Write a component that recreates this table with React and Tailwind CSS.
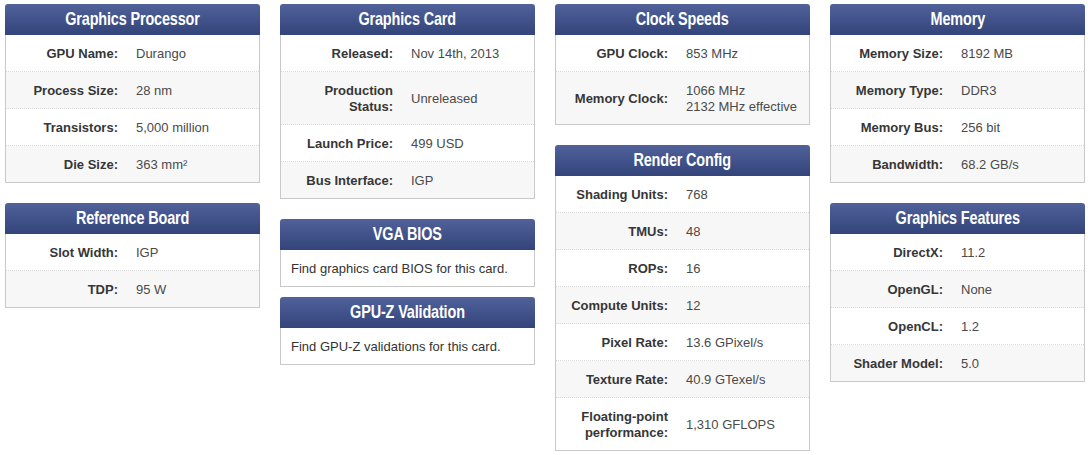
const col1 = [
  {
    title: 'Graphics Processor',
    rows: [
      ['GPU Name:', 'Durango'],
      ['Process Size:', '28 nm'],
      ['Transistors:', '5,000 million'],
      ['Die Size:', <>363 mm²</>],
    ],
  },
  {
    title: 'Reference Board',
    rows: [
      ['Slot Width:', 'IGP'],
      ['TDP:', '95 W'],
    ],
  },
];

const col2 = [
  {
    title: 'Graphics Card',
    rows: [
      ['Released:', 'Nov 14th, 2013'],
      [<>Production<br />Status:</>, 'Unreleased'],
      ['Launch Price:', '499 USD'],
      ['Bus Interface:', 'IGP'],
    ],
  },
  { title: 'VGA BIOS', text: 'Find graphics card BIOS for this card.', small: true },
  { title: 'GPU-Z Validation', text: 'Find GPU-Z validations for this card.' },
];

const col3 = [
  {
    title: 'Clock Speeds',
    rows: [
      ['GPU Clock:', '853 MHz'],
      ['Memory Clock:', <>1066 MHz<br />2132 MHz effective</>],
    ],
  },
  {
    title: 'Render Config',
    rows: [
      ['Shading Units:', '768'],
      ['TMUs:', '48'],
      ['ROPs:', '16'],
      ['Compute Units:', '12'],
      ['Pixel Rate:', '13.6 GPixel/s'],
      ['Texture Rate:', '40.9 GTexel/s'],
      [<>Floating-point<br />performance:</>, '1,310 GFLOPS'],
    ],
  },
];

const col4 = [
  {
    title: 'Memory',
    rows: [
      ['Memory Size:', '8192 MB'],
      ['Memory Type:', 'DDR3'],
      ['Memory Bus:', '256 bit'],
      ['Bandwidth:', '68.2 GB/s'],
    ],
  },
  {
    title: 'Graphics Features',
    rows: [
      ['DirectX:', '11.2'],
      ['OpenGL:', 'None'],
      ['OpenCL:', '1.2'],
      ['Shader Model:', '5.0'],
    ],
  },
];

function Card({ card }) {
  return (
    <section className={card.small ? 'mb-[10px]' : 'mb-[20px]'}>
      {/* condensed title font isn't installed, so squeeze a bold sans */}
      <h2 className="h-[31px] overflow-hidden whitespace-nowrap rounded-t-[3px] bg-gradient-to-b from-[#51629b] to-[#33447b] text-center text-[19px] font-bold leading-[30px] tracking-[-0.2px] text-white">
        <span className="inline-block scale-x-[0.76]">{card.title}</span>
      </h2>
      <div className="border border-t-0 border-[#c9c9c9]">
        {card.rows &&
          card.rows.map(([label, value], i) => (
            <div
              key={i}
              className={`flex items-center border-[#d8d8d8] ${i % 2 ? 'bg-[#f7f7f7]' : 'bg-white'} ${i < card.rows.length - 1 ? 'border-b border-dotted' : ''}`}
            >
              <div className="w-[120px] shrink-0 pb-[9px] pt-[11px] pr-[8px] text-right font-bold text-[#363636]">
                {label}
              </div>
              <div className="flex-1 pb-[9px] pt-[11px] pl-[10px] text-[#4a4a4a]">{value}</div>
            </div>
          ))}
        {card.text && <p className="px-[10px] pb-[9px] pt-[11px] text-[#333]">{card.text}</p>}
      </div>
    </section>
  );
}

export default function App() {
  const cols = [col1, col2, col3, col4];
  return (
    <div className="flex gap-[20px] bg-white pl-[5px] pt-[4px] font-['Liberation_Sans',Arial,sans-serif] text-[13px] leading-[16px]">
      {cols.map((col, i) => (
        <div key={i} className="w-[255px] shrink-0">
          {col.map((card) => (
            <Card key={card.title} card={card} />
          ))}
        </div>
      ))}
    </div>
  );
}
